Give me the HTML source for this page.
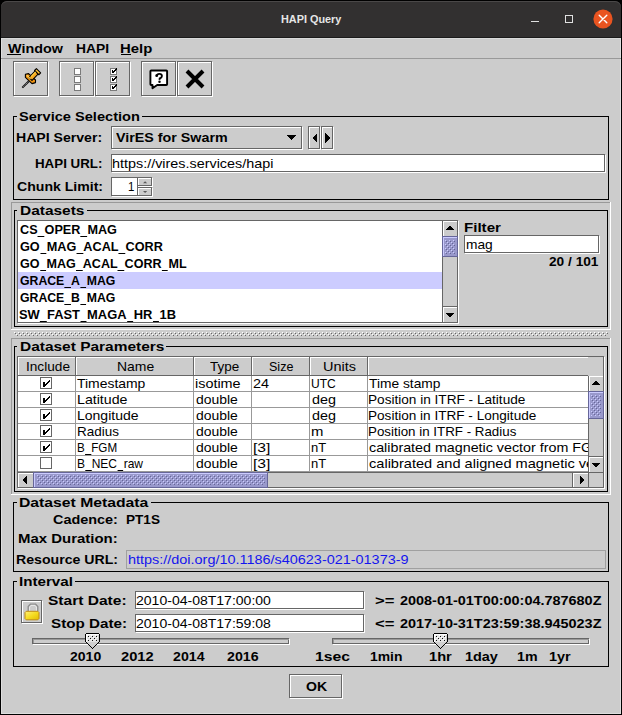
<!DOCTYPE html>
<html><head><meta charset="utf-8"><style>
html,body{margin:0;padding:0;width:622px;height:715px;overflow:hidden;background:#000}
div{position:absolute;box-sizing:border-box}
.t{white-space:pre;font-family:"Liberation Sans",sans-serif;transform-origin:0 0}
</style></head><body>
<div style="left:0px;top:0px;width:622px;height:715px;background:#000"></div>
<div style="left:1px;top:1px;width:620px;height:37px;background:#323030;border-radius:6px 6px 0 0;box-shadow:inset 0 1px 0 #4a4848"></div>
<div style="left:1px;top:37px;width:620px;height:1px;background:#1b1b1b"></div>
<div style="left:1px;top:38px;width:620px;height:676px;background:#cccccc"></div>
<div style="left:531px;top:21px;width:8px;height:1px;background:#e0e0e0"></div>
<div style="left:565px;top:15px;width:8px;height:8px;border:1px solid #e0e0e0;"></div>
<svg style="position:absolute;left:590px;top:6px" width="26" height="26" viewBox="0 0 26 26"><circle cx="13" cy="13" r="9.6" fill="#e95420"/><path d="M9.2 9.2 L16.8 16.8 M16.8 9.2 L9.2 16.8" stroke="#fff" stroke-width="1.4" stroke-linecap="round"/></svg>
<div style="left:1px;top:38px;width:620px;height:1px;background:#dadada"></div>
<div style="left:1px;top:38px;width:1px;height:676px;background:#dedede"></div>
<div style="left:620px;top:38px;width:1px;height:676px;background:#dedede"></div>
<div style="left:1px;top:713px;width:620px;height:1px;background:#dedede"></div>
<div style="left:1px;top:58px;width:620px;height:1px;background:#999999"></div>
<div style="left:14px;top:62px;width:35px;height:35px;border:1px solid #ffffff;"></div>
<div style="left:13px;top:61px;width:35px;height:35px;border:1px solid #666666;"></div>
<div style="left:60px;top:62px;width:35px;height:35px;border:1px solid #ffffff;"></div>
<div style="left:59px;top:61px;width:35px;height:35px;border:1px solid #666666;"></div>
<div style="left:96px;top:62px;width:35px;height:35px;border:1px solid #ffffff;"></div>
<div style="left:95px;top:61px;width:35px;height:35px;border:1px solid #666666;"></div>
<div style="left:142px;top:62px;width:35px;height:35px;border:1px solid #ffffff;"></div>
<div style="left:141px;top:61px;width:35px;height:35px;border:1px solid #666666;"></div>
<div style="left:178px;top:62px;width:35px;height:35px;border:1px solid #ffffff;"></div>
<div style="left:177px;top:61px;width:35px;height:35px;border:1px solid #666666;"></div>
<svg style="position:absolute;left:13px;top:61px" width="35" height="35" viewBox="0 0 35 35">
<path d="M9.3 26.6 L15.8 20.2" stroke="#111" stroke-width="2"/>
<path d="M10.3 25.6 L15.3 20.7" stroke="#f4f4f4" stroke-width="0.7" stroke-dasharray="1 1"/>
<path d="M12.4 13.2 L15.6 12.6 L22.5 19 L22.5 21.6 L19 22.6 L12.4 16.4 Z" fill="#f29410" stroke="#000" stroke-width="1.1" stroke-linejoin="round"/>
<path d="M16 16.4 L22.6 9.6 L25.6 12.6 L19 19.4 Z" fill="#f6a820" stroke="#000" stroke-width="1.1"/>
<path d="M23.4 7.66 L27.64 11.9 L25.8 13.74 L21.56 9.5 Z" fill="#f7b030" stroke="#000" stroke-width="1.1" stroke-linejoin="round"/>
<path d="M13.8 14.2 L17.6 17.8" stroke="#ffd860" stroke-width="1.1"/>
<path d="M18 15.6 L22.7 10.8" stroke="#ffd040" stroke-width="1.2"/>
<path d="M23.3 9.2 L26.2 12.1" stroke="#ffd040" stroke-width="0.9"/>
</svg>
<div style="left:74px;top:68px;width:7px;height:7px;border:1px solid #7a7a7a;background:#fff;"></div>
<div style="left:110px;top:68px;width:7px;height:7px;border:1px solid #7a7a7a;background:#fff;"></div>
<svg style="position:absolute;left:110px;top:68px" width="8" height="7" viewBox="0 0 8 7" shape-rendering="crispEdges"><g fill="#000"><rect x="2" y="2" width="1" height="3"/><rect x="3" y="3" width="1" height="2"/><rect x="4" y="2" width="1" height="2"/><rect x="5" y="1" width="1" height="2"/><rect x="6" y="0" width="1" height="2"/></g></svg>
<div style="left:74px;top:76px;width:7px;height:7px;border:1px solid #7a7a7a;background:#fff;"></div>
<div style="left:110px;top:76px;width:7px;height:7px;border:1px solid #7a7a7a;background:#fff;"></div>
<svg style="position:absolute;left:110px;top:76px" width="8" height="7" viewBox="0 0 8 7" shape-rendering="crispEdges"><g fill="#000"><rect x="2" y="2" width="1" height="3"/><rect x="3" y="3" width="1" height="2"/><rect x="4" y="2" width="1" height="2"/><rect x="5" y="1" width="1" height="2"/><rect x="6" y="0" width="1" height="2"/></g></svg>
<div style="left:74px;top:84px;width:7px;height:7px;border:1px solid #7a7a7a;background:#fff;"></div>
<div style="left:110px;top:84px;width:7px;height:7px;border:1px solid #7a7a7a;background:#fff;"></div>
<svg style="position:absolute;left:110px;top:84px" width="8" height="7" viewBox="0 0 8 7" shape-rendering="crispEdges"><g fill="#000"><rect x="2" y="2" width="1" height="3"/><rect x="3" y="3" width="1" height="2"/><rect x="4" y="2" width="1" height="2"/><rect x="5" y="1" width="1" height="2"/><rect x="6" y="0" width="1" height="2"/></g></svg>
<svg style="position:absolute;left:141px;top:61px" width="35" height="35" viewBox="0 0 35 35">
<path d="M10.2 9.5 H25.3 Q26.1 9.5 26.1 10.3 V23.2 Q26.1 24 25.3 24 H16.2 L11.5 27.2 V24 H10.2 Q9.4 24 9.4 23.2 V10.3 Q9.4 9.5 10.2 9.5 Z" fill="#fff" stroke="#000" stroke-width="1.9" stroke-linejoin="round"/>
<path d="M15.9 14.8 Q16.1 12.9 18.3 12.9 Q20.9 12.9 20.9 15 Q20.9 16.6 18.7 17.5 L18.5 18.9" fill="none" stroke="#000" stroke-width="1.9"/><circle cx="15.7" cy="14.7" r="1.4" fill="#000"/><circle cx="18.5" cy="20.7" r="1.25" fill="#000"/>
</svg>
<svg style="position:absolute;left:177px;top:61px" width="35" height="35" viewBox="0 0 35 35"><path d="M10 10 L26 26 M26 10 L10 26" stroke="#000" stroke-width="4"/></svg>
<div style="left:13px;top:116px;width:596px;height:84px;border:1px solid #000;"></div>
<div style="left:17px;top:114px;width:125px;height:5px;background:#cccccc"></div>
<div style="left:112px;top:127px;width:191px;height:23px;border:1px solid #ffffff;background:#cccccc;"></div>
<div style="left:111px;top:126px;width:191px;height:23px;border:1px solid #666666;"></div>
<svg style="position:absolute;left:280px;top:130px" width="20" height="15" viewBox="0 0 20 15" shape-rendering="crispEdges"><path d="M6 5 H16 L11 10 Z" fill="#000"/></svg>
<div style="left:309px;top:127px;width:12px;height:23px;border:1px solid #ffffff;background:#cccccc;"></div>
<div style="left:308px;top:126px;width:12px;height:23px;border:1px solid #666666;"></div>
<div style="left:322px;top:127px;width:12px;height:23px;border:1px solid #ffffff;background:#cccccc;"></div>
<div style="left:321px;top:126px;width:12px;height:23px;border:1px solid #666666;"></div>
<svg style="position:absolute;left:308px;top:126px" width="25" height="23" viewBox="0 0 25 23" shape-rendering="crispEdges"><path d="M9 7 V17 L4 12 Z M17 7 V17 L22 12 Z" fill="#000"/></svg>
<div style="left:112px;top:155px;width:494px;height:18px;border:1px solid #ffffff;background:#fff;"></div>
<div style="left:111px;top:154px;width:494px;height:18px;border:1px solid #666666;"></div>
<div style="left:112px;top:178px;width:27px;height:19px;border:1px solid #ffffff;background:#fff;"></div>
<div style="left:111px;top:177px;width:27px;height:19px;border:1px solid #666666;"></div>
<div style="left:138px;top:178px;width:15px;height:9px;border:1px solid #ffffff;background:#cccccc;"></div>
<div style="left:137px;top:177px;width:15px;height:9px;border:1px solid #666666;"></div>
<div style="left:138px;top:188px;width:15px;height:9px;border:1px solid #ffffff;background:#cccccc;"></div>
<div style="left:137px;top:187px;width:15px;height:9px;border:1px solid #666666;"></div>
<div style="left:138px;top:186px;width:15px;height:1px;background:#ffffff"></div>
<svg style="position:absolute;left:137px;top:177px" width="16" height="20" viewBox="0 0 16 20"><path d="M6 6.3 H10.2 L8.1 4.2 Z M6 14 H10.2 L8.1 16.1 Z" fill="#5a5a5a"/></svg>
<div style="left:11px;top:202px;width:600px;height:1px;background:#999999"></div>
<div style="left:11px;top:202px;width:1px;height:128px;background:#999999"></div>
<div style="left:11px;top:329px;width:600px;height:1px;background:#ffffff"></div>
<div style="left:610px;top:202px;width:1px;height:128px;background:#ffffff"></div>
<div style="left:14px;top:210px;width:594px;height:117px;border:1px solid #000;"></div>
<div style="left:17px;top:208px;width:70px;height:5px;background:#cccccc"></div>
<div style="left:17px;top:220px;width:441px;height:103px;border:1px solid #666666;"></div>
<div style="left:458px;top:221px;width:1px;height:103px;background:#ffffff"></div>
<div style="left:18px;top:323px;width:441px;height:1px;background:#ffffff"></div>
<div style="left:18px;top:221px;width:424px;height:101px;background:#fff"></div>
<div style="left:18px;top:272px;width:424px;height:17px;background:#ccccff"></div>
<div style="left:443px;top:221px;width:14px;height:101px;background:#cccccc"></div>
<div style="left:442px;top:221px;width:1px;height:101px;background:#666666"></div>
<div style="left:443px;top:221px;width:14px;height:1px;background:#ffffff"></div>
<div style="left:443px;top:221px;width:1px;height:15px;background:#ffffff"></div>
<svg style="position:absolute;left:446px;top:226px" width="8" height="4" viewBox="0 0 8 4" shape-rendering="crispEdges"><g fill="#000"><rect x="3" y="0" width="2" height="1"/><rect x="2" y="1" width="4" height="1"/><rect x="1" y="2" width="6" height="1"/><rect x="0" y="3" width="8" height="1"/></g></svg>
<div style="left:442px;top:306px;width:15px;height:1px;background:#666666"></div>
<div style="left:443px;top:307px;width:14px;height:1px;background:#ffffff"></div>
<div style="left:443px;top:307px;width:1px;height:15px;background:#ffffff"></div>
<svg style="position:absolute;left:446px;top:313px" width="8" height="4" viewBox="0 0 8 4" shape-rendering="crispEdges"><g fill="#000"><rect x="3" y="3" width="2" height="1"/><rect x="2" y="2" width="4" height="1"/><rect x="1" y="1" width="6" height="1"/><rect x="0" y="0" width="8" height="1"/></g></svg>
<div style="left:442px;top:236px;width:16px;height:21px;background:#9999cc"></div>
<div style="left:442px;top:236px;width:16px;height:21px;border:1px solid #666699;"></div>
<div style="left:443px;top:237px;width:14px;height:1px;background:#ccccff"></div>
<div style="left:443px;top:237px;width:1px;height:19px;background:#ccccff"></div>
<svg style="position:absolute;left:445px;top:240px" width="10" height="14" shape-rendering="crispEdges"><defs><pattern id="b1" width="4" height="4" patternUnits="userSpaceOnUse"><rect x="0" y="0" width="1" height="1" fill="#ccccff"/><rect x="2" y="2" width="1" height="1" fill="#ccccff"/><rect x="1" y="1" width="1" height="1" fill="#666699"/><rect x="3" y="3" width="1" height="1" fill="#666699"/></pattern></defs><rect width="10" height="14" fill="url(#b1)"/></svg>
<div style="left:465px;top:236px;width:135px;height:18px;border:1px solid #ffffff;background:#fff;"></div>
<div style="left:464px;top:235px;width:135px;height:18px;border:1px solid #666666;"></div>
<svg style="position:absolute;left:14px;top:332px" width="594" height="4" shape-rendering="crispEdges"><defs><pattern id="b2" width="4" height="4" patternUnits="userSpaceOnUse"><rect x="0" y="0" width="1" height="1" fill="#ffffff"/><rect x="2" y="2" width="1" height="1" fill="#ffffff"/><rect x="1" y="1" width="1" height="1" fill="#666666"/><rect x="3" y="3" width="1" height="1" fill="#666666"/></pattern></defs><rect width="594" height="4" fill="url(#b2)"/></svg>
<div style="left:11px;top:338px;width:600px;height:1px;background:#999999"></div>
<div style="left:11px;top:338px;width:1px;height:157px;background:#999999"></div>
<div style="left:11px;top:494px;width:600px;height:1px;background:#ffffff"></div>
<div style="left:610px;top:338px;width:1px;height:157px;background:#ffffff"></div>
<div style="left:14px;top:346px;width:594px;height:146px;border:1px solid #000;"></div>
<div style="left:17px;top:344px;width:149px;height:5px;background:#cccccc"></div>
<div style="left:17px;top:356px;width:587px;height:132px;border:1px solid #666666;"></div>
<div style="left:604px;top:357px;width:1px;height:132px;background:#ffffff"></div>
<div style="left:18px;top:488px;width:587px;height:1px;background:#ffffff"></div>
<div style="left:18px;top:357px;width:585px;height:19px;background:#cccccc"></div>
<div style="left:18px;top:357px;width:58px;height:1px;background:#ffffff"></div>
<div style="left:18px;top:357px;width:1px;height:18px;background:#ffffff"></div>
<div style="left:75px;top:357px;width:1px;height:19px;background:#666666"></div>
<div style="left:18px;top:375px;width:58px;height:1px;background:#666666"></div>
<div style="left:76px;top:357px;width:118px;height:1px;background:#ffffff"></div>
<div style="left:76px;top:357px;width:1px;height:18px;background:#ffffff"></div>
<div style="left:193px;top:357px;width:1px;height:19px;background:#666666"></div>
<div style="left:76px;top:375px;width:118px;height:1px;background:#666666"></div>
<div style="left:194px;top:357px;width:58px;height:1px;background:#ffffff"></div>
<div style="left:194px;top:357px;width:1px;height:18px;background:#ffffff"></div>
<div style="left:251px;top:357px;width:1px;height:19px;background:#666666"></div>
<div style="left:194px;top:375px;width:58px;height:1px;background:#666666"></div>
<div style="left:252px;top:357px;width:58px;height:1px;background:#ffffff"></div>
<div style="left:252px;top:357px;width:1px;height:18px;background:#ffffff"></div>
<div style="left:309px;top:357px;width:1px;height:19px;background:#666666"></div>
<div style="left:252px;top:375px;width:58px;height:1px;background:#666666"></div>
<div style="left:310px;top:357px;width:58px;height:1px;background:#ffffff"></div>
<div style="left:310px;top:357px;width:1px;height:18px;background:#ffffff"></div>
<div style="left:367px;top:357px;width:1px;height:19px;background:#666666"></div>
<div style="left:310px;top:375px;width:58px;height:1px;background:#666666"></div>
<div style="left:368px;top:357px;width:220px;height:1px;background:#ffffff"></div>
<div style="left:368px;top:357px;width:1px;height:18px;background:#ffffff"></div>
<div style="left:368px;top:375px;width:220px;height:1px;background:#666666"></div>
<div style="left:18px;top:376px;width:570px;height:96px;background:#fff"></div>
<div style="left:18px;top:391px;width:570px;height:1px;background:#999999"></div>
<div style="left:18px;top:407px;width:570px;height:1px;background:#999999"></div>
<div style="left:18px;top:423px;width:570px;height:1px;background:#999999"></div>
<div style="left:18px;top:439px;width:570px;height:1px;background:#999999"></div>
<div style="left:18px;top:455px;width:570px;height:1px;background:#999999"></div>
<div style="left:75px;top:376px;width:1px;height:96px;background:#999999"></div>
<div style="left:193px;top:376px;width:1px;height:96px;background:#999999"></div>
<div style="left:251px;top:376px;width:1px;height:96px;background:#999999"></div>
<div style="left:309px;top:376px;width:1px;height:96px;background:#999999"></div>
<div style="left:367px;top:376px;width:1px;height:96px;background:#999999"></div>
<div style="left:40px;top:377px;width:12px;height:12px;border:1px solid #666666;"></div>
<svg style="position:absolute;left:40px;top:377px" width="13" height="13" viewBox="0 0 13 13" shape-rendering="crispEdges"><g fill="#000"><rect x="3" y="5" width="2" height="5"/><rect x="9" y="3" width="1" height="1"/><rect x="8" y="4" width="1" height="1"/><rect x="7" y="5" width="1" height="1"/><rect x="6" y="6" width="1" height="1"/><rect x="5" y="7" width="1" height="1"/><rect x="9" y="4" width="1" height="1"/><rect x="8" y="5" width="1" height="1"/><rect x="7" y="6" width="1" height="1"/><rect x="6" y="7" width="1" height="1"/><rect x="5" y="8" width="1" height="1"/></g></svg>
<div style="left:40px;top:393px;width:12px;height:12px;border:1px solid #666666;"></div>
<svg style="position:absolute;left:40px;top:393px" width="13" height="13" viewBox="0 0 13 13" shape-rendering="crispEdges"><g fill="#000"><rect x="3" y="5" width="2" height="5"/><rect x="9" y="3" width="1" height="1"/><rect x="8" y="4" width="1" height="1"/><rect x="7" y="5" width="1" height="1"/><rect x="6" y="6" width="1" height="1"/><rect x="5" y="7" width="1" height="1"/><rect x="9" y="4" width="1" height="1"/><rect x="8" y="5" width="1" height="1"/><rect x="7" y="6" width="1" height="1"/><rect x="6" y="7" width="1" height="1"/><rect x="5" y="8" width="1" height="1"/></g></svg>
<div style="left:40px;top:409px;width:12px;height:12px;border:1px solid #666666;"></div>
<svg style="position:absolute;left:40px;top:409px" width="13" height="13" viewBox="0 0 13 13" shape-rendering="crispEdges"><g fill="#000"><rect x="3" y="5" width="2" height="5"/><rect x="9" y="3" width="1" height="1"/><rect x="8" y="4" width="1" height="1"/><rect x="7" y="5" width="1" height="1"/><rect x="6" y="6" width="1" height="1"/><rect x="5" y="7" width="1" height="1"/><rect x="9" y="4" width="1" height="1"/><rect x="8" y="5" width="1" height="1"/><rect x="7" y="6" width="1" height="1"/><rect x="6" y="7" width="1" height="1"/><rect x="5" y="8" width="1" height="1"/></g></svg>
<div style="left:40px;top:425px;width:12px;height:12px;border:1px solid #666666;"></div>
<svg style="position:absolute;left:40px;top:425px" width="13" height="13" viewBox="0 0 13 13" shape-rendering="crispEdges"><g fill="#000"><rect x="3" y="5" width="2" height="5"/><rect x="9" y="3" width="1" height="1"/><rect x="8" y="4" width="1" height="1"/><rect x="7" y="5" width="1" height="1"/><rect x="6" y="6" width="1" height="1"/><rect x="5" y="7" width="1" height="1"/><rect x="9" y="4" width="1" height="1"/><rect x="8" y="5" width="1" height="1"/><rect x="7" y="6" width="1" height="1"/><rect x="6" y="7" width="1" height="1"/><rect x="5" y="8" width="1" height="1"/></g></svg>
<div style="left:40px;top:441px;width:12px;height:12px;border:1px solid #666666;"></div>
<svg style="position:absolute;left:40px;top:441px" width="13" height="13" viewBox="0 0 13 13" shape-rendering="crispEdges"><g fill="#000"><rect x="3" y="5" width="2" height="5"/><rect x="9" y="3" width="1" height="1"/><rect x="8" y="4" width="1" height="1"/><rect x="7" y="5" width="1" height="1"/><rect x="6" y="6" width="1" height="1"/><rect x="5" y="7" width="1" height="1"/><rect x="9" y="4" width="1" height="1"/><rect x="8" y="5" width="1" height="1"/><rect x="7" y="6" width="1" height="1"/><rect x="6" y="7" width="1" height="1"/><rect x="5" y="8" width="1" height="1"/></g></svg>
<div style="left:40px;top:457px;width:12px;height:12px;border:1px solid #666666;"></div>
<div style="left:589px;top:376px;width:14px;height:96px;background:#cccccc"></div>
<div style="left:588px;top:376px;width:1px;height:96px;background:#666666"></div>
<div style="left:589px;top:376px;width:14px;height:1px;background:#ffffff"></div>
<div style="left:589px;top:376px;width:1px;height:15px;background:#ffffff"></div>
<svg style="position:absolute;left:592px;top:381px" width="8" height="4" viewBox="0 0 8 4" shape-rendering="crispEdges"><g fill="#000"><rect x="3" y="0" width="2" height="1"/><rect x="2" y="1" width="4" height="1"/><rect x="1" y="2" width="6" height="1"/><rect x="0" y="3" width="8" height="1"/></g></svg>
<div style="left:588px;top:456px;width:15px;height:1px;background:#666666"></div>
<div style="left:589px;top:457px;width:14px;height:1px;background:#ffffff"></div>
<div style="left:589px;top:457px;width:1px;height:15px;background:#ffffff"></div>
<svg style="position:absolute;left:592px;top:463px" width="8" height="4" viewBox="0 0 8 4" shape-rendering="crispEdges"><g fill="#000"><rect x="3" y="3" width="2" height="1"/><rect x="2" y="2" width="4" height="1"/><rect x="1" y="1" width="6" height="1"/><rect x="0" y="0" width="8" height="1"/></g></svg>
<div style="left:588px;top:391px;width:16px;height:28px;background:#9999cc"></div>
<div style="left:588px;top:391px;width:16px;height:28px;border:1px solid #666699;"></div>
<div style="left:589px;top:392px;width:14px;height:1px;background:#ccccff"></div>
<div style="left:589px;top:392px;width:1px;height:26px;background:#ccccff"></div>
<svg style="position:absolute;left:591px;top:395px" width="10" height="21" shape-rendering="crispEdges"><defs><pattern id="b3" width="4" height="4" patternUnits="userSpaceOnUse"><rect x="0" y="0" width="1" height="1" fill="#ccccff"/><rect x="2" y="2" width="1" height="1" fill="#ccccff"/><rect x="1" y="1" width="1" height="1" fill="#666699"/><rect x="3" y="3" width="1" height="1" fill="#666699"/></pattern></defs><rect width="10" height="21" fill="url(#b3)"/></svg>
<div style="left:18px;top:472px;width:585px;height:15px;background:#cccccc"></div>
<div style="left:18px;top:471px;width:570px;height:1px;background:#999999"></div>
<div style="left:18px;top:472px;width:585px;height:1px;background:#666666"></div>
<div style="left:18px;top:473px;width:15px;height:1px;background:#ffffff"></div>
<div style="left:18px;top:473px;width:1px;height:14px;background:#ffffff"></div>
<svg style="position:absolute;left:23px;top:476px" width="4" height="8" viewBox="0 0 4 8" shape-rendering="crispEdges"><g fill="#000"><rect x="0" y="3" width="1" height="2"/><rect x="1" y="2" width="1" height="4"/><rect x="2" y="1" width="1" height="6"/><rect x="3" y="0" width="1" height="8"/></g></svg>
<div style="left:572px;top:472px;width:1px;height:15px;background:#666666"></div>
<div style="left:573px;top:473px;width:15px;height:1px;background:#ffffff"></div>
<div style="left:573px;top:473px;width:1px;height:14px;background:#ffffff"></div>
<svg style="position:absolute;left:580px;top:476px" width="4" height="8" viewBox="0 0 4 8" shape-rendering="crispEdges"><g fill="#000"><rect x="3" y="3" width="1" height="2"/><rect x="2" y="2" width="1" height="4"/><rect x="1" y="1" width="1" height="6"/><rect x="0" y="0" width="1" height="8"/></g></svg>
<div style="left:33px;top:472px;width:235px;height:16px;background:#9999cc"></div>
<div style="left:33px;top:472px;width:235px;height:16px;border:1px solid #666699;"></div>
<div style="left:34px;top:473px;width:233px;height:1px;background:#ccccff"></div>
<div style="left:34px;top:473px;width:1px;height:14px;background:#ccccff"></div>
<svg style="position:absolute;left:37px;top:475px" width="228" height="10" shape-rendering="crispEdges"><defs><pattern id="b4" width="4" height="4" patternUnits="userSpaceOnUse"><rect x="0" y="0" width="1" height="1" fill="#ccccff"/><rect x="2" y="2" width="1" height="1" fill="#ccccff"/><rect x="1" y="1" width="1" height="1" fill="#666699"/><rect x="3" y="3" width="1" height="1" fill="#666699"/></pattern></defs><rect width="228" height="10" fill="url(#b4)"/></svg>
<div style="left:588px;top:471px;width:1px;height:16px;background:#666666"></div>
<div style="left:13px;top:502px;width:596px;height:70px;border:1px solid #000;"></div>
<div style="left:17px;top:500px;width:134px;height:5px;background:#cccccc"></div>
<div style="left:126px;top:550px;width:480px;height:19px;border:1px solid #a0a0a0;"></div>
<div style="left:13px;top:581px;width:596px;height:86px;border:1px solid #000;"></div>
<div style="left:17px;top:579px;width:58px;height:5px;background:#cccccc"></div>
<div style="left:22px;top:601px;width:21px;height:23px;border:1px solid #ffffff;background:#cccccc;"></div>
<div style="left:21px;top:600px;width:21px;height:23px;border:1px solid #666666;"></div>
<svg style="position:absolute;left:21px;top:600px" width="22" height="23" viewBox="0 0 22 23">
<defs><linearGradient id="lg" x1="0" y1="0" x2="1" y2="1"><stop offset="0" stop-color="#fff07a"/><stop offset="0.5" stop-color="#f5dc22"/><stop offset="1" stop-color="#e2bc00"/></linearGradient></defs>
<path d="M7.2 11.5 V6.6 L9.4 4.1 H14.6 L16.8 6.6 V11.5" fill="none" stroke="#8c8c8c" stroke-width="1.3"/>
<path d="M8.6 11 V7 L10.1 5.4 H13.9 L15.4 7 V11" fill="none" stroke="#f2f2f2" stroke-width="0.8"/>
<path d="M5.2 11.3 H16.8 L18 12.5 V18.6 L16.8 19.8 H5.2 L4 18.6 V12.5 Z" fill="url(#lg)" stroke="#c08c12" stroke-width="1"/>
</svg>
<div style="left:136px;top:592px;width:229px;height:18px;border:1px solid #ffffff;background:#fff;"></div>
<div style="left:135px;top:591px;width:229px;height:18px;border:1px solid #666666;"></div>
<div style="left:136px;top:615px;width:229px;height:18px;border:1px solid #ffffff;background:#fff;"></div>
<div style="left:135px;top:614px;width:229px;height:18px;border:1px solid #666666;"></div>
<div style="left:32px;top:638px;width:257px;height:6px;border:1px solid #666666;"></div>
<div style="left:33px;top:639px;width:256px;height:1px;background:#999999"></div>
<div style="left:33px;top:639px;width:1px;height:4px;background:#999999"></div>
<div style="left:33px;top:644px;width:257px;height:1px;background:#ffffff"></div>
<div style="left:289px;top:639px;width:1px;height:6px;background:#ffffff"></div>
<div style="left:332px;top:638px;width:257px;height:6px;border:1px solid #666666;"></div>
<div style="left:333px;top:639px;width:256px;height:1px;background:#999999"></div>
<div style="left:333px;top:639px;width:1px;height:4px;background:#999999"></div>
<div style="left:333px;top:644px;width:257px;height:1px;background:#ffffff"></div>
<div style="left:589px;top:639px;width:1px;height:6px;background:#ffffff"></div>
<svg style="position:absolute;left:85px;top:633px" width="15" height="16" viewBox="0 0 15 16" shape-rendering="crispEdges"><path d="M1.5 0.5 H13.5 L14.5 1.5 V8.5 L7.5 15.5 L0.5 8.5 V1.5 Z" fill="#d0d0d0" stroke="#000" stroke-width="1"/><rect x="1" y="1" width="13" height="1" fill="#fff"/><rect x="1" y="1" width="1" height="8" fill="#fff"/><rect x="2" y="2" width="11" height="7" fill="#e4e4e4"/><path d="M2 2h1v1h-1z M6 2h1v1h-1z M10 2h1v1h-1z M4 4h1v1h-1z M8 4h1v1h-1z M12 4h1v1h-1z M2 6h1v1h-1z M6 6h1v1h-1z M10 6h1v1h-1z" fill="#fff"/><path d="M3 3h1v1h-1z M7 3h1v1h-1z M11 3h1v1h-1z M5 5h1v1h-1z M9 5h1v1h-1z M3 7h1v1h-1z M7 7h1v1h-1z M11 7h1v1h-1z" fill="#111"/></svg>
<svg style="position:absolute;left:433px;top:633px" width="15" height="16" viewBox="0 0 15 16" shape-rendering="crispEdges"><path d="M1.5 0.5 H13.5 L14.5 1.5 V8.5 L7.5 15.5 L0.5 8.5 V1.5 Z" fill="#d0d0d0" stroke="#000" stroke-width="1"/><rect x="1" y="1" width="13" height="1" fill="#fff"/><rect x="1" y="1" width="1" height="8" fill="#fff"/><rect x="2" y="2" width="11" height="7" fill="#e4e4e4"/><path d="M2 2h1v1h-1z M6 2h1v1h-1z M10 2h1v1h-1z M4 4h1v1h-1z M8 4h1v1h-1z M12 4h1v1h-1z M2 6h1v1h-1z M6 6h1v1h-1z M10 6h1v1h-1z" fill="#fff"/><path d="M3 3h1v1h-1z M7 3h1v1h-1z M11 3h1v1h-1z M5 5h1v1h-1z M9 5h1v1h-1z M3 7h1v1h-1z M7 7h1v1h-1z M11 7h1v1h-1z" fill="#111"/></svg>
<div style="left:290px;top:675px;width:53px;height:24px;border:1px solid #ffffff;background:#cccccc;"></div>
<div style="left:289px;top:674px;width:53px;height:24px;border:1px solid #666666;"></div>
<div class="t" style="left:281.01px;top:14px;font-size:11px;line-height:11px;font-weight:700;color:#e6e6e6;transform:scaleX(0.9867)">HAPI Query</div>
<div class="t" style="left:8.00px;top:42px;font-size:13px;line-height:13px;font-weight:700;color:#000;transform:scaleX(1.1020)">Window</div>
<div class="t" style="left:75.94px;top:42px;font-size:13px;line-height:13px;font-weight:700;color:#000;transform:scaleX(1.0621)">HAPI</div>
<div class="t" style="left:119.86px;top:42px;font-size:13px;line-height:13px;font-weight:700;color:#000;transform:scaleX(1.1444)">Help</div>
<div class="t" style="left:18.88px;top:110px;font-size:13px;line-height:13px;font-weight:700;color:#000;transform:scaleX(1.1226)">Service Selection</div>
<div class="t" style="left:15.92px;top:131px;font-size:13px;line-height:13px;font-weight:700;color:#000;transform:scaleX(1.0833)">HAPI Server:</div>
<div class="t" style="left:34.98px;top:157px;font-size:13px;line-height:13px;font-weight:700;color:#000;transform:scaleX(1.0250)">HAPI URL:</div>
<div class="t" style="left:17.00px;top:180px;font-size:13px;line-height:13px;font-weight:700;color:#000;transform:scaleX(1.0833)">Chunk Limit:</div>
<div class="t" style="left:116.00px;top:131px;font-size:13px;line-height:13px;font-weight:700;color:#000;transform:scaleX(1.0990)">VirES for Swarm</div>
<div class="t" style="left:111.89px;top:157px;font-size:13px;line-height:13px;font-weight:400;color:#000;transform:scaleX(1.1056)">https://vires.services/hapi</div>
<div class="t" style="left:128.12px;top:180px;font-size:13px;line-height:13px;font-weight:400;color:#000;transform:scaleX(0.8833)">1</div>
<div class="t" style="left:19.81px;top:204px;font-size:13px;line-height:13px;font-weight:700;color:#000;transform:scaleX(1.1887)">Datasets</div>
<div class="t" style="left:20.00px;top:223px;font-size:13px;line-height:13px;font-weight:700;color:#000;transform:scaleX(0.9727)">CS<span style="display:inline-block;width:0.5em;margin:0 0.028em;height:1px;background:#000;vertical-align:-3px"></span>OPER<span style="display:inline-block;width:0.5em;margin:0 0.028em;height:1px;background:#000;vertical-align:-3px"></span>MAG</div>
<div class="t" style="left:20.00px;top:240px;font-size:13px;line-height:13px;font-weight:700;color:#000;transform:scaleX(0.9747)">GO<span style="display:inline-block;width:0.5em;margin:0 0.028em;height:1px;background:#000;vertical-align:-3px"></span>MAG<span style="display:inline-block;width:0.5em;margin:0 0.028em;height:1px;background:#000;vertical-align:-3px"></span>ACAL<span style="display:inline-block;width:0.5em;margin:0 0.028em;height:1px;background:#000;vertical-align:-3px"></span>CORR</div>
<div class="t" style="left:20.00px;top:257px;font-size:13px;line-height:13px;font-weight:700;color:#000;transform:scaleX(0.9653)">GO<span style="display:inline-block;width:0.5em;margin:0 0.028em;height:1px;background:#000;vertical-align:-3px"></span>MAG<span style="display:inline-block;width:0.5em;margin:0 0.028em;height:1px;background:#000;vertical-align:-3px"></span>ACAL<span style="display:inline-block;width:0.5em;margin:0 0.028em;height:1px;background:#000;vertical-align:-3px"></span>CORR<span style="display:inline-block;width:0.5em;margin:0 0.028em;height:1px;background:#000;vertical-align:-3px"></span>ML</div>
<div class="t" style="left:20.00px;top:274px;font-size:13px;line-height:13px;font-weight:700;color:#000;transform:scaleX(0.9436)">GRACE<span style="display:inline-block;width:0.5em;margin:0 0.028em;height:1px;background:#000;vertical-align:-3px"></span>A<span style="display:inline-block;width:0.5em;margin:0 0.028em;height:1px;background:#000;vertical-align:-3px"></span>MAG</div>
<div class="t" style="left:20.00px;top:291px;font-size:13px;line-height:13px;font-weight:700;color:#000;transform:scaleX(0.9436)">GRACE<span style="display:inline-block;width:0.5em;margin:0 0.028em;height:1px;background:#000;vertical-align:-3px"></span>B<span style="display:inline-block;width:0.5em;margin:0 0.028em;height:1px;background:#000;vertical-align:-3px"></span>MAG</div>
<div class="t" style="left:19.01px;top:308px;font-size:13px;line-height:13px;font-weight:700;color:#000;transform:scaleX(0.9924)">SW<span style="display:inline-block;width:0.5em;margin:0 0.028em;height:1px;background:#000;vertical-align:-3px"></span>FAST<span style="display:inline-block;width:0.5em;margin:0 0.028em;height:1px;background:#000;vertical-align:-3px"></span>MAGA<span style="display:inline-block;width:0.5em;margin:0 0.028em;height:1px;background:#000;vertical-align:-3px"></span>HR<span style="display:inline-block;width:0.5em;margin:0 0.028em;height:1px;background:#000;vertical-align:-3px"></span>1B</div>
<div class="t" style="left:463.84px;top:221px;font-size:13px;line-height:13px;font-weight:700;color:#000;transform:scaleX(1.1613)">Filter</div>
<div class="t" style="left:465.94px;top:238px;font-size:13px;line-height:13px;font-weight:400;color:#000;transform:scaleX(1.0583)">mag</div>
<div class="t" style="left:549.00px;top:255px;font-size:13px;line-height:13px;font-weight:700;color:#000;transform:scaleX(1.0532)">20 / 101</div>
<div class="t" style="left:19.81px;top:340px;font-size:13px;line-height:13px;font-weight:700;color:#000;transform:scaleX(1.1892)">Dataset Parameters</div>
<div class="t" style="left:25.95px;top:360px;font-size:13px;line-height:13px;font-weight:400;color:#000;transform:scaleX(1.0488)">Include</div>
<div class="t" style="left:116.93px;top:360px;font-size:13px;line-height:13px;font-weight:400;color:#000;transform:scaleX(1.0727)">Name</div>
<div class="t" style="left:210.00px;top:360px;font-size:13px;line-height:13px;font-weight:400;color:#000;transform:scaleX(1.0357)">Type</div>
<div class="t" style="left:269.04px;top:360px;font-size:13px;line-height:13px;font-weight:400;color:#000;transform:scaleX(0.9625)">Size</div>
<div class="t" style="left:322.89px;top:360px;font-size:13px;line-height:13px;font-weight:400;color:#000;transform:scaleX(1.1143)">Units</div>
<div class="t" style="left:77.00px;top:377px;font-size:13px;line-height:13px;font-weight:400;color:#000;transform:scaleX(1.0714)">Timestamp</div>
<div class="t" style="left:194.89px;top:377px;font-size:13px;line-height:13px;font-weight:400;color:#000;transform:scaleX(1.1075)">isotime</div>
<div class="t" style="left:252.89px;top:377px;font-size:13px;line-height:13px;font-weight:400;color:#000;transform:scaleX(1.1077)">24</div>
<div class="t" style="left:311.07px;top:377px;font-size:13px;line-height:13px;font-weight:400;color:#000;transform:scaleX(0.9280)">UTC</div>
<div style="left:18px;top:375px;width:570px;height:19px;overflow:hidden"><div style="left:351.00px;top:2px;font-size:13px;line-height:13px;font-weight:400;color:#000;transform:scaleX(1.0597)" class="t">Time stamp</div></div>
<div class="t" style="left:76.91px;top:393px;font-size:13px;line-height:13px;font-weight:400;color:#000;transform:scaleX(1.0911)">Latitude</div>
<div class="t" style="left:196.00px;top:393px;font-size:13px;line-height:13px;font-weight:400;color:#000;transform:scaleX(1.0718)">double</div>
<div class="t" style="left:312.00px;top:393px;font-size:13px;line-height:13px;font-weight:400;color:#000;transform:scaleX(1.1048)">deg</div>
<div style="left:18px;top:391px;width:570px;height:19px;overflow:hidden"><div style="left:349.95px;top:2px;font-size:13px;line-height:13px;font-weight:400;color:#000;transform:scaleX(1.0470)" class="t">Position in ITRF - Latitude</div></div>
<div class="t" style="left:76.92px;top:409px;font-size:13px;line-height:13px;font-weight:400;color:#000;transform:scaleX(1.0768)">Longitude</div>
<div class="t" style="left:196.00px;top:409px;font-size:13px;line-height:13px;font-weight:400;color:#000;transform:scaleX(1.0718)">double</div>
<div class="t" style="left:312.00px;top:409px;font-size:13px;line-height:13px;font-weight:400;color:#000;transform:scaleX(1.1048)">deg</div>
<div style="left:18px;top:407px;width:570px;height:19px;overflow:hidden"><div style="left:349.96px;top:2px;font-size:13px;line-height:13px;font-weight:400;color:#000;transform:scaleX(1.0444)" class="t">Position in ITRF - Longitude</div></div>
<div class="t" style="left:76.96px;top:425px;font-size:13px;line-height:13px;font-weight:400;color:#000;transform:scaleX(1.0359)">Radius</div>
<div class="t" style="left:196.00px;top:425px;font-size:13px;line-height:13px;font-weight:400;color:#000;transform:scaleX(1.0718)">double</div>
<div class="t" style="left:310.86px;top:425px;font-size:13px;line-height:13px;font-weight:400;color:#000;transform:scaleX(1.1444)">m</div>
<div style="left:18px;top:423px;width:570px;height:19px;overflow:hidden"><div style="left:349.97px;top:2px;font-size:13px;line-height:13px;font-weight:400;color:#000;transform:scaleX(1.0266)" class="t">Position in ITRF - Radius</div></div>
<div class="t" style="left:77.10px;top:441px;font-size:13px;line-height:13px;font-weight:400;color:#000;transform:scaleX(0.8953)">B<span style="display:inline-block;width:0.5em;margin:0 0.028em;height:1px;background:#000;vertical-align:-3px"></span>FGM</div>
<div class="t" style="left:196.00px;top:441px;font-size:13px;line-height:13px;font-weight:400;color:#000;transform:scaleX(1.0718)">double</div>
<div class="t" style="left:252.79px;top:441px;font-size:13px;line-height:13px;font-weight:400;color:#000;transform:scaleX(1.2077)">[3]</div>
<div class="t" style="left:311.00px;top:441px;font-size:13px;line-height:13px;font-weight:400;color:#000;transform:scaleX(1.0000)">nT</div>
<div style="left:18px;top:439px;width:570px;height:19px;overflow:hidden"><div style="left:351.00px;top:2px;font-size:13px;line-height:13px;font-weight:400;color:#000;transform:scaleX(1.0989)" class="t">calibrated magnetic vector from FGM</div></div>
<div class="t" style="left:77.08px;top:457px;font-size:13px;line-height:13px;font-weight:400;color:#000;transform:scaleX(0.9225)">B<span style="display:inline-block;width:0.5em;margin:0 0.028em;height:1px;background:#000;vertical-align:-3px"></span>NEC<span style="display:inline-block;width:0.5em;margin:0 0.028em;height:1px;background:#000;vertical-align:-3px"></span>raw</div>
<div class="t" style="left:196.00px;top:457px;font-size:13px;line-height:13px;font-weight:400;color:#000;transform:scaleX(1.0718)">double</div>
<div class="t" style="left:252.79px;top:457px;font-size:13px;line-height:13px;font-weight:400;color:#000;transform:scaleX(1.2077)">[3]</div>
<div class="t" style="left:311.00px;top:457px;font-size:13px;line-height:13px;font-weight:400;color:#000;transform:scaleX(1.0000)">nT</div>
<div style="left:18px;top:455px;width:570px;height:19px;overflow:hidden"><div style="left:351.00px;top:2px;font-size:13px;line-height:13px;font-weight:400;color:#000;transform:scaleX(1.1208)" class="t">calibrated and aligned magnetic vector</div></div>
<div class="t" style="left:18.79px;top:496px;font-size:13px;line-height:13px;font-weight:700;color:#000;transform:scaleX(1.2094)">Dataset Metadata</div>
<div class="t" style="left:53.00px;top:513px;font-size:13px;line-height:13px;font-weight:700;color:#000;transform:scaleX(1.1086)">Cadence:</div>
<div class="t" style="left:125.95px;top:513px;font-size:13px;line-height:13px;font-weight:700;color:#000;transform:scaleX(1.0452)">PT1S</div>
<div class="t" style="left:17.85px;top:532px;font-size:13px;line-height:13px;font-weight:700;color:#000;transform:scaleX(1.1494)">Max Duration:</div>
<div class="t" style="left:15.91px;top:553px;font-size:13px;line-height:13px;font-weight:700;color:#000;transform:scaleX(1.0870)">Resource URL:</div>
<div class="t" style="left:127.89px;top:553px;font-size:13px;line-height:13px;font-weight:400;color:#1515ee;transform:scaleX(1.1100)">https://doi.org/10.1186/s40623-021-01373-9</div>
<div class="t" style="left:18.83px;top:575px;font-size:13px;line-height:13px;font-weight:700;color:#000;transform:scaleX(1.1667)">Interval</div>
<div class="t" style="left:47.80px;top:594px;font-size:13px;line-height:13px;font-weight:700;color:#000;transform:scaleX(1.1953)">Start Date:</div>
<div class="t" style="left:50.83px;top:617px;font-size:13px;line-height:13px;font-weight:700;color:#000;transform:scaleX(1.1683)">Stop Date:</div>
<div class="t" style="left:135.92px;top:594px;font-size:13px;line-height:13px;font-weight:400;color:#000;transform:scaleX(1.0790)">2010-04-08T17:00:00</div>
<div class="t" style="left:135.92px;top:617px;font-size:13px;line-height:13px;font-weight:400;color:#000;transform:scaleX(1.0790)">2010-04-08T17:59:08</div>
<div class="t" style="left:375.00px;top:594px;font-size:13px;line-height:13px;font-weight:700;color:#000;transform:scaleX(1.2800)">&gt;=</div>
<div class="t" style="left:400.00px;top:594px;font-size:13px;line-height:13px;font-weight:700;color:#000;transform:scaleX(1.1105)">2008-01-01T00:00:04.787680Z</div>
<div class="t" style="left:375.00px;top:617px;font-size:13px;line-height:13px;font-weight:700;color:#000;transform:scaleX(1.2800)">&lt;=</div>
<div class="t" style="left:400.00px;top:617px;font-size:13px;line-height:13px;font-weight:700;color:#000;transform:scaleX(1.1105)">2017-10-31T23:59:38.945023Z</div>
<div class="t" style="left:70.00px;top:650px;font-size:13px;line-height:13px;font-weight:700;color:#000;transform:scaleX(1.0793)">2010</div>
<div class="t" style="left:121.00px;top:650px;font-size:13px;line-height:13px;font-weight:700;color:#000;transform:scaleX(1.1310)">2012</div>
<div class="t" style="left:173.00px;top:650px;font-size:13px;line-height:13px;font-weight:700;color:#000;transform:scaleX(1.0897)">2014</div>
<div class="t" style="left:227.00px;top:650px;font-size:13px;line-height:13px;font-weight:700;color:#000;transform:scaleX(1.0931)">2016</div>
<div class="t" style="left:314.79px;top:650px;font-size:13px;line-height:13px;font-weight:700;color:#000;transform:scaleX(1.2111)">1sec</div>
<div class="t" style="left:369.93px;top:650px;font-size:13px;line-height:13px;font-weight:700;color:#000;transform:scaleX(1.0690)">1min</div>
<div class="t" style="left:428.87px;top:650px;font-size:13px;line-height:13px;font-weight:700;color:#000;transform:scaleX(1.1263)">1hr</div>
<div class="t" style="left:464.89px;top:650px;font-size:13px;line-height:13px;font-weight:700;color:#000;transform:scaleX(1.1103)">1day</div>
<div class="t" style="left:516.91px;top:650px;font-size:13px;line-height:13px;font-weight:700;color:#000;transform:scaleX(1.0941)">1m</div>
<div class="t" style="left:548.89px;top:650px;font-size:13px;line-height:13px;font-weight:700;color:#000;transform:scaleX(1.1105)">1yr</div>
<div class="t" style="left:306.00px;top:680px;font-size:13px;line-height:13px;font-weight:700;color:#000;transform:scaleX(1.0842)">OK</div>
<div style="left:7px;top:54px;width:14px;height:1px;background:#000"></div>
<div style="left:121px;top:54px;width:10px;height:1px;background:#000"></div>
</body></html>
